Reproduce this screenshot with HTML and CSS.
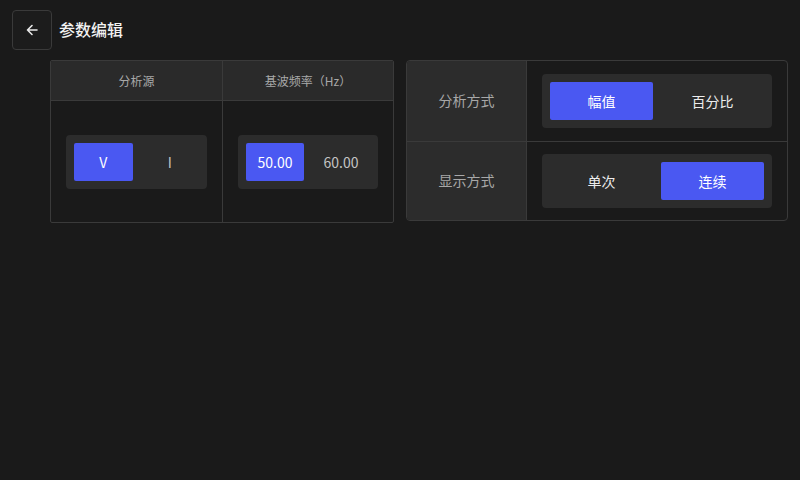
FILE: index.html
```html
<!DOCTYPE html>
<html lang="zh-CN">
<head>
<meta charset="utf-8">
<title>参数编辑</title>
<link rel="stylesheet" href="styles.css">
</head>
<body>
<div class="page">
  <header class="topbar">
    <button class="back" aria-label="返回">
      <svg width="14" height="14" viewBox="0 0 14 14"><path d="M12 7H2.5M7 2.5L2.5 7L7 11.5" fill="none" stroke="#e8e8e8" stroke-width="1.6" stroke-linecap="round" stroke-linejoin="round"/></svg>
    </button>
    <h1 class="title">参数编辑</h1>
  </header>
  <main class="content">
    <section class="grid-table">
      <div class="col">
        <div class="th">分析源</div>
        <div class="td">
          <div class="seg seg-sm">
            <span class="opt on">V</span>
            <span class="opt">I</span>
          </div>
        </div>
      </div>
      <div class="col">
        <div class="th">基波频率（Hz）</div>
        <div class="td">
          <div class="seg seg-sm">
            <span class="opt on">50.00</span>
            <span class="opt">60.00</span>
          </div>
        </div>
      </div>
    </section>
    <section class="form-table">
      <div class="row">
        <div class="label">分析方式</div>
        <div class="value">
          <div class="seg">
            <span class="opt on">幅值</span>
            <span class="opt bright">百分比</span>
          </div>
        </div>
      </div>
      <div class="row">
        <div class="label">显示方式</div>
        <div class="value">
          <div class="seg">
            <span class="opt bright">单次</span>
            <span class="opt on">连续</span>
          </div>
        </div>
      </div>
    </section>
  </main>
</div>
</body>
</html>
```
FILE: styles.css
```css
* { box-sizing: border-box; }
html, body {
  margin: 0;
  padding: 0;
  background: #1a1a1a;
  font-family: "Noto Sans CJK SC", "Noto Sans", sans-serif;
  color: #e6e6e6;
}
.page {
  width: 800px;
  height: 480px;
  padding: 10px 12px 0 12px;
}
.topbar {
  display: flex;
  align-items: center;
  gap: 7px;
  height: 40px;
}
.back {
  width: 40px;
  height: 40px;
  padding: 0;
  border: 1px solid #3a3a3a;
  border-radius: 4px;
  background: #1c1c1c;
  display: flex;
  align-items: center;
  justify-content: center;
}
.title {
  margin: 0 0 3px 0;
  font-size: 16px;
  line-height: 20px;
  font-weight: 500;
  color: #f2f2f2;
}
.content {
  display: flex;
  align-items: flex-start;
  gap: 12px;
  margin-top: 10px;
  margin-left: 38px;
}
.grid-table {
  display: flex;
  width: 344px;
  border: 1px solid #3a3a3a;
  border-radius: 2px;
  overflow: hidden;
}
.col { flex: 1; display: flex; flex-direction: column; }
.col + .col { border-left: 1px solid #3a3a3a; }
.col:first-child { flex: 0 0 171px; }
.th {
  height: 40px;
  background: #2a2a2a;
  border-bottom: 1px solid #3a3a3a;
  display: flex;
  align-items: center;
  justify-content: center;
  font-size: 12px;
  line-height: 16px;
  color: #a8a8a8;
}
.td {
  height: 121px;
  display: flex;
  align-items: center;
  padding: 0 15px;
}
.seg {
  flex: 1;
  display: flex;
  gap: 8px;
  padding: 8px;
  background: #2c2c2c;
  border-radius: 4px;
}
.opt {
  flex: 1;
  height: 38px;
  display: flex;
  align-items: center;
  justify-content: center;
  font-size: 14px;
  line-height: 18px;
  font-weight: 400;
  color: #c4c4c4;
  border-radius: 2px;
}
.opt.bright { color: #ececec; }
.opt.on {
  background: #4a58f2;
  color: #ffffff;
}
.form-table {
  width: 382px;
  border: 1px solid #3a3a3a;
  border-radius: 4px;
  overflow: hidden;
}
.row { display: flex; height: 80px; }
.row + .row { border-top: 1px solid #3a3a3a; height: 79px; }
.label {
  flex: 0 0 120px;
  background: #2c2c2c;
  border-right: 1px solid #3a3a3a;
  display: flex;
  align-items: center;
  justify-content: center;
  font-size: 14px;
  line-height: 18px;
  color: #a8a8a8;
  padding-bottom: 2px;
}
.value {
  flex: 1;
  display: flex;
  align-items: center;
  padding: 0 15px 1px 15px;
}
```
